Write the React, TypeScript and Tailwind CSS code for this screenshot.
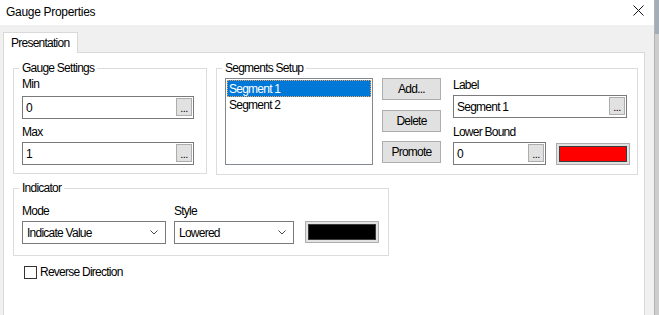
import React from "react";

const FONT = "font-['Liberation_Sans',Arial,sans-serif] text-[12px] leading-[14px] tracking-[-0.75px] text-black";

function Ell() {
  return (
    <div className="ml-auto mr-px mt-px flex h-[18px] w-[16px] shrink-0 items-end justify-center border border-[#adadad] bg-[#e1e1e1] pb-[2px] text-[11px] leading-[10px] tracking-[-0.5px]">
      ...
    </div>
  );
}

function TextBox({ value, className }: { value: string; className: string }) {
  return (
    <div className={`flex h-[23px] border border-[#7a7a7a] bg-white ${className}`}>
      <span className="self-center pl-[3px]">{value}</span>
      <Ell />
    </div>
  );
}

function Combo({ value, className }: { value: string; className: string }) {
  return (
    <div className={`flex h-[23px] items-center justify-between border border-[#7a7a7a] bg-white pl-[4px] pr-[7px] ${className}`}>
      <span>{value}</span>
      <svg width="8" height="5" viewBox="0 0 8 5">
        <path d="M0.5 0.5 L4 4 L7.5 0.5" fill="none" stroke="#4a4a4a" strokeWidth="1" />
      </svg>
    </div>
  );
}

function ColorBtn({ color, className }: { color: string; className: string }) {
  return (
    <div className={`flex h-[22px] w-[74px] border border-[#adadad] bg-[#e1e1e1] p-[2px] ${className}`}>
      <div className="flex-1 border border-[#3c3c3c]" style={{ background: color }} />
    </div>
  );
}

function Button({ label, className }: { label: string; className: string }) {
  return (
    <div className={`flex h-[22px] w-[59px] items-center justify-center border border-[#adadad] bg-[#e1e1e1] ${className}`}>
      {label}
    </div>
  );
}

function Group({ title, className, children }: { title: string; className: string; children: React.ReactNode }) {
  return (
    <div className={`relative border border-[#dcdcdc] ${className}`}>
      <div className="absolute left-[5px] top-[-8px] bg-white px-[3px]">{title}</div>
      {children}
    </div>
  );
}

export default function App() {
  return (
    <div className={`flex h-[315px] w-[659px] overflow-hidden ${FONT}`}>
      <div className="flex w-[654px] flex-col">
        {/* title bar */}
        <div className="flex h-[25px] shrink-0 items-center bg-white">
          <span className="pl-[6px] pb-[2px] tracking-[-0.3px]">Gauge Properties</span>
          <svg className="ml-auto mr-[10px] mb-[5px]" width="11" height="11" viewBox="0 0 11 11">
            <path d="M0.5 0.5 L10.5 10.5 M10.5 0.5 L0.5 10.5" stroke="#111" strokeWidth="1" />
          </svg>
        </div>
        {/* body */}
        <div className="flex flex-1 flex-col bg-[#f0f0f0] pl-[3px] pr-[9px] pt-[7px]">
          <div className="relative z-10 -mb-px flex h-[21px] w-[75px] items-center border-x border-t border-[#d9d9d9] bg-white pl-[7px]">
            Presentation
          </div>
          <div className="flex flex-1 flex-col border border-b-0 border-[#d9d9d9] bg-white pl-[9px]">
            {/* row 1 */}
            <div className="mt-[15px] flex items-start">
              <Group title="Gauge Settings" className="h-[106px] w-[194px] pl-[8px]">
                <div className="mt-[8px]">Min</div>
                <TextBox value="0" className="mt-[5px] w-[172px]" />
                <div className="mt-[6px]">Max</div>
                <TextBox value="1" className="mt-[3px] w-[172px]" />
              </Group>
              <Group title="Segments Setup" className="ml-[9px] flex h-[107px] w-[422px] pl-[8px]">
                <div className="mt-[9px] flex h-[87px] w-[148px] flex-col border border-[#828790] bg-white p-px">
                  <div className="flex h-[17px] items-center border border-dotted border-[#f3a35e] bg-[#0078d7] pl-[1px] text-white">
                    Segment 1
                  </div>
                  <div className="flex h-[15px] items-center pl-[2px]">Segment 2</div>
                </div>
                <div className="ml-[9px] mt-[9px] flex flex-col">
                  <Button label="Add..." className="" />
                  <Button label="Delete" className="mt-[10px]" />
                  <Button label="Promote" className="mt-[9px]" />
                </div>
                <div className="ml-[12px] mt-[9px] flex flex-col">
                  <div>Label</div>
                  <TextBox value="Segment 1" className="mt-[3px] w-[174px]" />
                  <div className="mt-[7px]">Lower Bound</div>
                  <div className="mt-[3px] flex items-start">
                    <TextBox value="0" className="w-[93px]" />
                    <ColorBtn color="#ff0000" className="ml-[10px] mt-px" />
                  </div>
                </div>
              </Group>
            </div>
            {/* indicator */}
            <Group title="Indicator" className="mt-[13px] h-[68px] w-[376px] pl-[8px]">
              <div className="mt-[15px] flex items-start">
                <div className="flex flex-col">
                  <div>Mode</div>
                  <Combo value="Indicate Value" className="mt-[3px] w-[144px]" />
                </div>
                <div className="ml-[8px] flex flex-col">
                  <div>Style</div>
                  <Combo value="Lowered" className="mt-[3px] w-[120px]" />
                </div>
                <ColorBtn color="#000000" className="ml-[11px] mt-[17px]" />
              </div>
            </Group>
            {/* checkbox */}
            <div className="ml-[11px] mt-[9px] flex items-center">
              <div className="h-[13px] w-[13px] border border-[#333333] bg-white" />
              <span className="ml-[3px]">Reverse Direction</span>
            </div>
          </div>
        </div>
      </div>
      {/* right strip */}
      <div className="flex w-[5px] flex-col border-l border-[#b4b4b4] bg-[#cdcdcd]">
        <div className="h-[34px] bg-[#a3adb8]" />
      </div>
    </div>
  );
}
